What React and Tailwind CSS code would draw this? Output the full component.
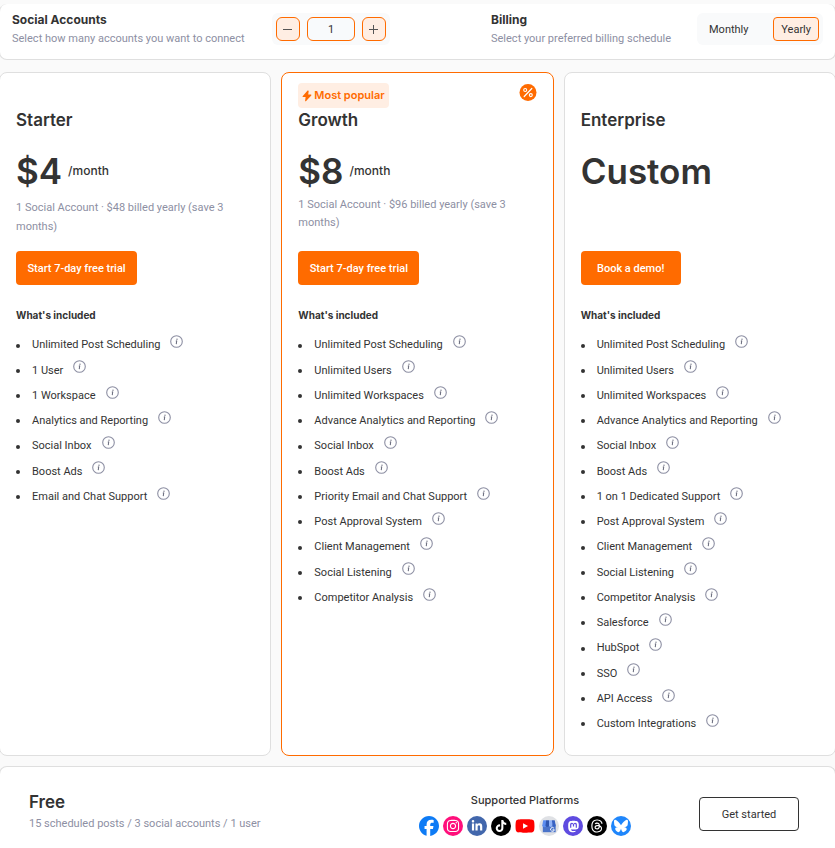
import { useState } from "react";
import clsx from "clsx";
import { FaBluesky, FaFacebook, FaInstagram, FaLinkedinIn, FaMastodon, FaThreads, FaTiktok, FaYoutube } from "react-icons/fa6";

const plans = [
  {
    name: "Starter",
    price: { monthly: 5, yearly: 4 },
    cta: "Start 7-day free trial",
    features: [
      "Unlimited Post Scheduling",
      "1 User",
      "1 Workspace",
      "Analytics and Reporting",
      "Social Inbox",
      "Boost Ads",
      "Email and Chat Support",
    ],
  },
  {
    name: "Growth",
    popular: true,
    price: { monthly: 11, yearly: 8 },
    cta: "Start 7-day free trial",
    features: [
      "Unlimited Post Scheduling",
      "Unlimited Users",
      "Unlimited Workspaces",
      "Advance Analytics and Reporting",
      "Social Inbox",
      "Boost Ads",
      "Priority Email and Chat Support",
      "Post Approval System",
      "Client Management",
      "Social Listening",
      "Competitor Analysis",
    ],
  },
  {
    name: "Enterprise",
    cta: "Book a demo!",
    features: [
      "Unlimited Post Scheduling",
      "Unlimited Users",
      "Unlimited Workspaces",
      "Advance Analytics and Reporting",
      "Social Inbox",
      "Boost Ads",
      "1 on 1 Dedicated Support",
      "Post Approval System",
      "Client Management",
      "Social Listening",
      "Competitor Analysis",
      "Salesforce",
      "HubSpot",
      "SSO",
      "API Access",
      "Custom Integrations",
    ],
  },
];

const InfoIcon = () => (
  <svg viewBox="0 0 13 13" className="w-[13px] h-[13px] shrink-0 -mt-2" fill="none" aria-hidden="true">
    <circle cx="6.5" cy="6.5" r="5.8" stroke="#8d8fa3" strokeWidth="1.1" />
    <path d="M5.8 6 L6.8 5.8 L6.2 8.8 L6.9 8.6" stroke="#55576b" strokeWidth="0.9" />
    <circle cx="7" cy="4.2" r="0.6" fill="#55576b" />
  </svg>
);

const BoltIcon = () => (
  <svg viewBox="0 0 10 12" className="w-2.5 h-3" fill="currentColor" aria-hidden="true">
    <path d="M5.6 0.6 L0.6 6.2 Q0.3 7 1 7 H3.6 L3.1 11 Q3.4 11.7 4.1 11 L9.3 5.4 Q9.6 4.6 8.9 4.6 H6.2 L6.7 1 Q6.4 0 5.6 0.6 Z" />
  </svg>
);

const PercentIcon = () => (
  <svg viewBox="0 0 18 18" className="w-[18px] h-[18px]" fill="none" aria-hidden="true">
    <circle cx="9" cy="9.5" r="8.5" fill="#ff6b00" />
    <path d="M12.8 5.5 L5.2 13.5" stroke="#fff" strokeWidth="1.2" strokeLinecap="round" />
    <circle cx="6.2" cy="7" r="1.5" stroke="#fff" strokeWidth="1.1" />
    <circle cx="11.8" cy="12.1" r="1.5" stroke="#fff" strokeWidth="1.1" />
  </svg>
);

const GoogleBusinessIcon = () => (
  <svg viewBox="0 0 21 21" className="w-5 h-5" aria-hidden="true">
    <circle cx="10.5" cy="10.5" r="10.5" fill="#dfe1e5" />
    <path d="M4 9h13.5v8H4z" fill="#4a73c9" />
    <path d="M4.4 4.5h3.3v5.2a2.1 2.1 0 0 1-4.2 0z" fill="#5c8df0" />
    <path d="M7.5 4.5h3v5.2a1.6 1.6 0 0 1-3.6 0z" fill="#2f56b0" />
    <path d="M10.5 4.5h3l.6 5.2a1.8 1.8 0 0 1-3.6 0z" fill="#8fb2f7" />
    <path d="M13.5 4.5h3l1 5.2a1.7 1.7 0 0 1-3.4 0z" fill="#3762c4" />
    <path d="M15.6 12.7a2 2 0 1 0 .5 1.8h-1.9" stroke="#fff" strokeWidth="1" fill="none" />
  </svg>
);

const PlatformDot = ({ className, children }) => (
  <span className={clsx("flex items-center justify-center w-5 h-5 rounded-full text-white", className)}>
    {children}
  </span>
);

const PlanCard = ({ plan, accounts, billing }) => {
  const amount = plan.price ? plan.price[billing] * accounts : null;

  return (
    <article
      className={clsx(
        "bg-white border rounded-lg px-4 pt-2.5 pb-[18px]",
        plan.popular ? "border-[#ff6b00]" : "border-[#dfdfdf]"
      )}
    >
      <div className="flex items-start justify-between h-[25px]">
        {plan.popular && (
          <>
            <span className="flex items-center gap-0.5 h-full px-1 rounded-sm bg-[#ffeee3] text-[#ff6b00] text-[11px] font-semibold font-['Inter']">
              <BoltIcon />
              Most popular
            </span>
            <PercentIcon />
          </>
        )}
      </div>
      <h2 className="text-[17px] leading-6 font-semibold font-['Inter']">{plan.name}</h2>

      <div className="flex items-center gap-1.5 mt-4 h-[46px] font-['Inter']">
        <span className="text-[35px] font-semibold">{plan.price ? `$${amount}` : "Custom"}</span>
        {plan.price && <span className="text-xs font-medium">/month</span>}
      </div>
      <p
        className={clsx(
          "min-h-[57px] pr-5 text-[11px] text-[#8d8fa3]",
          plan.popular ? "pt-0.5 leading-[18px]" : "pt-1 leading-[19px]"
        )}
      >
        {plan.price &&
          (billing === "yearly"
            ? `${accounts} Social Account · $${amount * 12} billed yearly (save 3 months)`
            : `${accounts} Social Account · $${amount} billed monthly`)}
      </p>

      <button
        className={clsx(
          "h-[34px] pt-0.5 rounded-sm bg-[#ff6b00] text-white text-[11px] font-medium",
          plan.price ? "w-[121px]" : "w-[100px]"
        )}
      >
        {plan.cta}
      </button>

      <h3 className="mt-[22px] text-[10px] leading-4 font-bold font-['Inter']">What's included</h3>
      <ul className="grid grid-rows-16 min-h-[404px] mt-2.5">
        {plan.features.map((feature) => (
          <li key={feature} className="flex items-center text-[11px]">
            <span className="w-1 h-1 mr-3 rounded-full bg-[#333]" />
            {feature}
            <span className="ml-2.5">
              <InfoIcon />
            </span>
          </li>
        ))}
      </ul>
    </article>
  );
};

const App = () => {
  const [accounts, setAccounts] = useState(1);
  const [billing, setBilling] = useState("yearly");

  return (
    <div className="min-h-screen overflow-hidden bg-[#fafafa] pt-1 text-[#333] font-['Roboto','Liberation_Sans',sans-serif]">
      <div className="-mx-px">
        <header className="flex items-start justify-between h-14 pl-3 pr-3 pt-[9px] bg-white border border-t-0 border-[#dfdfdf] rounded-lg">
          <div className="flex">
            <div className="w-[260px]">
              <label htmlFor="accounts" className="block text-xs leading-[14px] font-bold font-['Inter']">Social Accounts</label>
              <p className="mt-1 text-[11px] leading-4 text-[#8d8fa3]">Select how many accounts you want to connect</p>
            </div>
            <div className="flex items-center gap-[7px] h-8 px-1 rounded-md bg-[#f9fafb]">
              <button
                aria-label="Remove account"
                onClick={() => setAccounts(Math.max(1, accounts - 1))}
                className="flex items-center justify-center w-6 h-6 border border-[#ff6b00] rounded-md bg-[#ffeee3]"
              >
                <svg width="10" height="10" stroke="#555" aria-hidden="true"><path d="M0 5.5h9" /></svg>
              </button>
              <input
                id="accounts"
                value={accounts}
                onChange={(e) => setAccounts(Number(e.target.value) || 1)}
                className="w-12 h-6 border border-[#ff6b00] rounded-md bg-[#f8fafc] text-[11px] text-center outline-none"
              />
              <button
                aria-label="Add account"
                onClick={() => setAccounts(accounts + 1)}
                className="flex items-center justify-center w-6 h-6 border border-[#ff6b00] rounded-md bg-[#ffeee3]"
              >
                <svg width="10" height="10" stroke="#555" aria-hidden="true"><path d="M0 5.5h9M4.5 1v9" /></svg>
              </button>
            </div>
          </div>

          <div className="flex">
            <div className="w-[206px]">
              <p className="text-xs leading-[14px] font-bold font-['Inter']">Billing</p>
              <p className="mt-1 text-[11px] leading-4 text-[#8d8fa3]">Select your preferred billing schedule</p>
            </div>
            <div className="flex items-center justify-between w-[126px] h-8 px-1 rounded-md bg-[#f9fafb] text-[11px]">
              {["Monthly", "Yearly"].map((option) => (
                <button
                  key={option}
                  onClick={() => setBilling(option.toLowerCase())}
                  className={clsx(
                    "h-6 pt-0.5 px-[7px] border rounded-sm",
                    billing === option.toLowerCase() ? "border-[#ff6b00] bg-[#ffeee3]" : "border-transparent"
                  )}
                >
                  {option}
                </button>
              ))}
            </div>
          </div>
        </header>

        <main className="grid grid-cols-3 gap-2.5 mt-3">
          {plans.map((plan) => (
            <PlanCard key={plan.name} plan={plan} accounts={accounts} billing={billing} />
          ))}
        </main>

        <footer className="flex items-start mt-2.5 pl-[29px] pr-9 pt-[23px] pb-4 bg-white border border-b-0 border-[#dfdfdf] rounded-t-lg">
          <div>
            <h2 className="text-[17px] leading-6 font-semibold font-['Inter']">Free</h2>
            <p className="text-[11px] leading-5 text-[#8d8fa3]">15 scheduled posts / 3 social accounts / 1 user</p>
          </div>
          <div className="ml-auto mr-[68px] text-center">
            <p className="text-[11px] leading-5 font-medium font-['Inter']">Supported Platforms</p>
            <div className="flex items-center gap-1 mt-1.5">
              <FaFacebook size={20} color="#0e7bf5" />
              <PlatformDot className="bg-[#ff0f7b]"><FaInstagram size={14} /></PlatformDot>
              <PlatformDot className="bg-[#4267ac]"><FaLinkedinIn size={12} /></PlatformDot>
              <PlatformDot className="bg-black"><FaTiktok size={12} /></PlatformDot>
              <FaYoutube size={20} color="#ff0000" />
              <GoogleBusinessIcon />
              <PlatformDot className="bg-[#5f4be0]"><FaMastodon size={13} /></PlatformDot>
              <PlatformDot className="bg-black"><FaThreads size={14} /></PlatformDot>
              <PlatformDot className="bg-[#1f86fb]"><FaBluesky size={14} /></PlatformDot>
            </div>
          </div>
          <button className="w-[100px] h-[34px] mt-[7px] pt-0.5 border border-[#333] rounded-sm text-[11px]">Get started</button>
        </footer>
      </div>
    </div>
  );
};

export default App;
